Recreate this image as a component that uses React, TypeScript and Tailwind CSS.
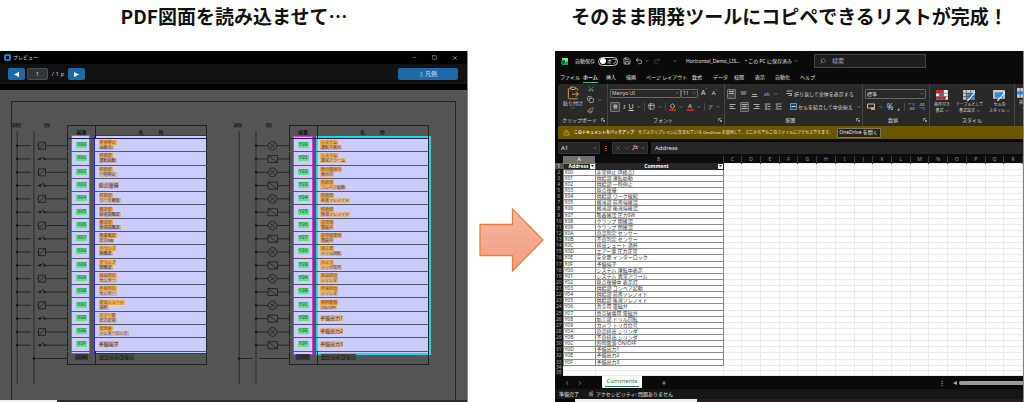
import React from 'react';
import { AlertTriangle, Bold, ChevronDown, ChevronLeft, ChevronRight, ClipboardPaste, Copy, Minus, Plus, Save, Search, Scissors, Square, Undo2, Redo2, X, Check, Table2, Paintbrush, Accessibility, Lightbulb } from 'lucide-react';

type Signal = [string, string, string?];

const inputs: Signal[] = [
  ['X00', '非常停止', '(B接点)'],
  ['X01', '供給部', '運転始動'],
  ['X02', '供給部', '一時停止'],
  ['X03', '原点復帰'],
  ['X04', '供給部', 'ワーク検知'],
  ['X05', '搬送部', '前進端確認'],
  ['X06', '搬送部', '後退端確認'],
  ['X07', '吸着確認', '圧力SW'],
  ['X08', 'クランプ', '開確認'],
  ['X09', 'クランプ', '閉確認'],
  ['X0A', '良品判定', 'センサー'],
  ['X0B', '不良判定', 'センサー'],
  ['X0C', '排出シュート', '満杯'],
  ['X0D', 'エアー源', '圧力正常'],
  ['X0E', '安全扉', 'インターロック'],
  ['X0F', '予備端子'],
];

const outputs: Signal[] = [
  ['Y00', 'システム', '運転中表示'],
  ['Y01', 'システム', '異常アラーム'],
  ['Y02', '原点復帰中', '表示灯'],
  ['Y03', '供給部', 'コンベア起動'],
  ['Y04', '供給部', '前進ソレノイド'],
  ['Y05', '供給部', '後退ソレノイド'],
  ['Y06', '真空用', '電磁弁'],
  ['Y07', '真空破壊用', '電磁弁'],
  ['Y08', '加工部', 'ドリル回転'],
  ['Y09', 'カメラ', 'トリガ信号'],
  ['Y0A', '良品排出', 'シリンダ'],
  ['Y0B', '不良排出', 'シリンダ'],
  ['Y0C', '照明電源', 'ON/OFF'],
  ['Y0D', '予備出力1'],
  ['Y0E', '予備出力2'],
  ['Y0F', '予備出力3'],
];

const PITCH = 13.3;
const FIRST = 17.7;

function Wiring({ output }: { output: boolean }) {
  const bus = output ? 22 : 5;
  const comY = FIRST + PITCH * 16;
  return (
    <svg width="55" height="264" viewBox="0 0 55 264" fill="none" stroke="#1c1c1c" strokeWidth="0.8" aria-hidden="true">
      <path d="M5.2 3V256M22 3V256" stroke="#333" strokeWidth="1.2" />
      {inputs.map((_, i) => {
        const y = FIRST + PITCH * i;
        return (
          <g key={i}>
            <circle cx={bus} cy={y} r="1" fill="#111" />
            {output ? (
              <>
                <path d={`M22 ${y}H34M43 ${y}H55`} />
                {i % 2 === 0 ? (
                  <>
                    <circle cx="38.5" cy={y} r="4.4" />
                    <path d={`M35.5 ${y - 3}l6 6m0 -6l-6 6`} />
                  </>
                ) : (
                  <path d={`M34 ${y - 3.5}h9.5v7h-9.5zM34 ${y - 3.5}l9.5 7`} />
                )}
              </>
            ) : (
              <>
                <path d={`M5 ${y}H19`} />
                {i % 2 === 0 ? (
                  <path d={`M26.5 ${y - 3.5}h7v7h-7zM26.5 ${y + 3.5}l7 -7M25 ${y}h2M33.5 ${y}H55`} />
                ) : (
                  <>
                    <path d={`M25 ${y}h2.5M28 ${y}l4 -2.5M33 ${y}H55`} />
                    <circle cx="28" cy={y} r="0.9" fill="#111" />
                    <circle cx="32.6" cy={y} r="0.9" fill="#111" />
                  </>
                )}
              </>
            )}
          </g>
        );
      })}
      <circle cx={output ? 5 : 22} cy={comY} r="1" fill="#111" />
      <path d={output ? `M5 ${comY}H19M25 ${comY}H55` : `M22 ${comY}H55`} />
    </svg>
  );
}

function TerminalTable({ rows, output }: { rows: Signal[]; output: boolean }) {
  return (
    <div className="relative w-[140px]">
      <div className={output ? 'absolute left-[4px] top-[11px] h-[219px] w-[20px] border border-fuchsia-500 bg-[#ccccff]' : 'absolute left-[4px] top-[10px] h-[219px] w-[19px] border border-[#e04858] bg-[#ccccff]'} />
      <div className={output ? 'absolute left-[27px] top-[11px] h-[219px] w-[115px] border-2 border-[#20d8e4] bg-[#ccccff]' : 'absolute left-[27px] top-[10px] h-[219px] w-[113px] border border-[#2828d0] bg-[#ccccff]'} />
      <table className="relative h-[240px] w-full table-fixed border-collapse border border-[#242424] text-[5px] leading-none">
        <colgroup>
          <col className="w-[28px]" />
          <col />
        </colgroup>
        <thead>
          <tr className="h-[13px] border-b border-[#242448] text-[#161616]">
            <th className="border-r border-[#242424] p-0 font-bold">端番</th>
            <th className="p-0 font-bold">名　　　称</th>
          </tr>
        </thead>
        <tbody>
          {rows.map(([address, first, second]) => (
            <tr key={address} className="h-[13px] border-b border-[#55556e]">
              <td className="p-0 text-center align-middle font-mono leading-[6px]">
                <span className="bg-[#63dc8c] px-px text-[#12602f]">{address}</span>
              </td>
              <td className="p-0 pl-[3px] align-middle leading-[6px]">
                {second ? (
                  <div className="flex flex-col items-start text-[4px] leading-[5px]">
                    <span className="bg-[#eaaa52] px-px text-[#70400c]">{first}</span>
                    <span className={output ? 'bg-[#dfb591] px-px text-[#4c3020]' : 'bg-[#c9b2b2] px-px text-[#3c2c2c]'}>{second}</span>
                  </div>
                ) : (
                  <div className="flex">
                    <span className={output ? 'bg-[#dfb591] text-[#4c3020]' : 'bg-[#c9b2b2] text-[#3c2c2c]'}>{first}</span>
                  </div>
                )}
              </td>
            </tr>
          ))}
          <tr className="h-[13px] text-[#121212]">
            <td className="border-r border-[#242424] p-0 text-center"><span className="bg-[#3c3c3c] px-px">COM</span></td>
            <td className="p-0 pl-[3px]"><span className="bg-[#444]">ユニットコモン</span></td>
          </tr>
        </tbody>
      </table>
    </div>
  );
}

function Circuit({ rows, output = false }: { rows: Signal[]; output?: boolean }) {
  return (
    <div className="flex w-[222px] items-start">
      <div className="w-[55px]">
        <div className="flex justify-between pr-[17px] text-[5px] leading-none text-[#161616]">
          <span className="bg-[#444]">24V</span>
          <span className="bg-[#444]">0V</span>
        </div>
        <Wiring output={output} />
      </div>
      <div className="pt-[2px]">
        <TerminalTable rows={rows} output={output} />
      </div>
    </div>
  );
}

function PreviewWindow() {
  return (
    <section className="flex flex-col overflow-hidden border-r border-[#888] bg-[#555]" aria-label="プレビュー">
      <header className="flex h-[13px] items-center gap-[2px] bg-black pl-1 pr-[9px] text-[5px] leading-none text-[#d4d4d4]">
        <svg width="7" height="7" viewBox="0 0 7 7"><rect x="1" y="1" width="5" height="5" rx="0.8" fill="#02162a" stroke="#18a0f0" strokeWidth="1.6" /></svg>
        <span className="flex-1">プレビュー</span>
        <div className="flex gap-[15px]">
          <button aria-label="最小化"><Minus size={5} /></button>
          <button aria-label="最大化"><Square size={5} /></button>
          <button aria-label="閉じる"><X size={6} /></button>
        </div>
      </header>
      <div className="flex h-[20px] items-center bg-[#121212] pl-2 pr-[9px] text-[6px] leading-none text-[#ccc]">
        <button aria-label="前のページ" className="flex h-[12px] w-[17px] items-center justify-center rounded-[2px] bg-[#1e6aa8]">
          <svg width="5" height="5" viewBox="0 0 5 5" fill="#fff"><path d="M5 0v5L0 2.5z" /></svg>
        </button>
        <input aria-label="ページ" defaultValue="1" className="ml-[2px] h-[12px] w-[21px] rounded-[2px] border border-[#4c4f52] bg-[#333638] text-center" />
        <span className="w-[20px] text-center">/ 1 p</span>
        <button aria-label="次のページ" className="flex h-[12px] w-[17px] items-center justify-center rounded-[2px] bg-[#1e6aa8]">
          <svg width="5" height="5" viewBox="0 0 5 5" fill="#fff"><path d="M0 0v5l5-2.5z" /></svg>
        </button>
        <button className="ml-auto flex h-[12px] w-[60px] items-center justify-center gap-px rounded-[2px] bg-[#1e6aa8] text-[#d8e6f0]">
          <Lightbulb size={5} className="rotate-180" />凡例
        </button>
      </div>
      <div className="h-[6px] bg-black" />
      <div className="flex flex-1 flex-col pl-[11px] pr-[11px] pt-[11px]">
        <div className="flex-1 border border-b-0 border-[#262626] pt-[21px]">
          <div className="flex">
            <Circuit rows={inputs} />
            <Circuit rows={outputs} output />
          </div>
        </div>
      </div>
      <div className="flex h-[2px] bg-[#2a2a2a]"><span className="w-[57px] bg-[#eee]" /></div>
    </section>
  );
}

const tabs = ['ファイル', 'ホーム', '挿入', '描画', 'ページ レイアウト', '数式', 'データ', '校閲', '表示', '自動化', 'ヘルプ'];

function Caret() {
  return <ChevronDown size={4} strokeWidth={3} className="shrink-0 text-[#bbb]" />;
}

function Lines({ d }: { d: string }) {
  return <svg width="7" height="7" viewBox="0 0 7 7" stroke="#bbb" strokeWidth="0.9" fill="none"><path d={d} /></svg>;
}

function Group({ label, className, children }: { label: string; className: string; children: React.ReactNode }) {
  return (
    <div className={`flex h-full flex-col border-r border-[#454545] ${className}`}>
      <div className="flex h-[32px] min-w-0 flex-col justify-center">{children}</div>
      <div className="flex h-[8px] items-center pr-[2px]">
        <span className="flex-1 text-center">{label}</span>
        <svg width="4" height="4" viewBox="0 0 4 4" fill="none" stroke="#bbb" strokeWidth="0.7"><path d="M.5 3V.5H3M1.5 1.5L3.5 3.5M3.5 2v1.5H2" /></svg>
      </div>
    </div>
  );
}

function StyleButton({ first, second, children }: { first: string; second: string; children: React.ReactNode }) {
  return (
    <button className="flex flex-col items-center text-[4px] leading-[6px] whitespace-nowrap">
      <svg width="14" height="13" viewBox="0 0 13 12">{children}</svg>
      <span>{first}</span>
      <span className="flex items-center gap-px">{second}<Caret /></span>
    </button>
  );
}

function Ribbon() {
  return (
    <div className="ml-[3px] flex h-[42px] overflow-hidden rounded-l-[2px] bg-[#292929] text-[5px] leading-[6px] text-[#d6d6d6]">
      <Group label="クリップボード" className="w-[50px] shrink-0">
        <div className="flex gap-[4px] pl-[5px]">
          <button className="flex w-[20px] flex-col items-center whitespace-nowrap">
            <ClipboardPaste size={14} strokeWidth={1.7} className="text-[#d8a04c]" />
            <span>貼り付け</span>
            <Caret />
          </button>
          <div className="flex flex-col items-center gap-[4px]">
            <button aria-label="切り取り"><Scissors size={6} className="-rotate-90 text-[#6aa8dc]" /></button>
            <button aria-label="コピー"><Copy size={7} /></button>
            <button aria-label="書式のコピー"><Paintbrush size={7} className="text-[#e0b060]" /></button>
          </div>
          <span className="self-center"><Caret /></span>
        </div>
      </Group>
      <Group label="フォント" className="w-[117px] shrink-0">
        <div className="flex items-center pl-[2px]">
          <button className="flex h-[9px] w-[71px] items-center justify-between rounded-[1px] border border-[#666] px-px">Meiryo UI<Caret /></button>
          <button className="flex h-[9px] w-[17px] items-center justify-between rounded-[1px] border border-[#666] px-px">11<Caret /></button>
          <button className="ml-[3px] text-[7px]">A<sup className="text-[#58a8e8]">ˆ</sup></button>
          <button className="ml-[4px] text-[6px]">A<sup className="text-[#58a8e8]">ˇ</sup></button>
        </div>
        <div className="mt-[4px] flex items-center justify-between pl-[2px] pr-[4px] text-[7px]">
          <button aria-label="太字" className="flex size-[10px] items-center justify-center rounded-[1px] border border-[#777] bg-[#444]"><Bold size={5} strokeWidth={4} /></button>
          <button className="font-serif italic">I</button>
          <button className="underline">U</button><Caret />
          <span className="h-2 w-px bg-[#4a4a4a]" />
          <button aria-label="罫線"><Table2 size={7} /></button><Caret />
          <span className="h-2 w-px bg-[#4a4a4a]" />
          <button aria-label="塗りつぶしの色">
            <svg width="7" height="8" viewBox="0 0 7 8"><path d="M3.5 .8L6 3.200L3.500 5.400L1 3.200z" fill="none" stroke="#ccc" strokeWidth=".8" /><path d="M0 6h7v2H0z" fill="#e01818" /></svg>
          </button><Caret />
          <button className="h-[8px] w-[7px] border-b-2 border-[#e01818] text-[6px] leading-[6px]">A</button><Caret />
          <span className="h-2 w-px bg-[#4a4a4a]" />
          <button className="text-[5px]">ア</button><Caret />
        </div>
      </Group>
      <Group label="配置" className="w-[138px] shrink-0">
        <div className="flex items-center gap-[4px] pl-[2px]">
          <button aria-label="上揃え" className="flex size-[10px] items-center justify-center rounded-[1px] border border-[#777] bg-[#444]"><Lines d="M1 1.5h5M1 3.5h5" /></button>
          <button aria-label="上下中央揃え"><Lines d="M.5 2h6M1 4h5" /></button>
          <button aria-label="下揃え"><Lines d="M1 4.5h5M.5 6.5h6" /></button>
          <button className="ml-[2px] text-[#6ab0e8]">ab</button><Caret />
          <span className="flex-1" />
          <button className="flex items-center gap-px pr-[10px] whitespace-nowrap"><Lines d="M.5 1h6M.5 3.5h5v2h-3" />折り返して全体を表示する</button>
        </div>
        <div className="mt-[3px] flex items-center gap-[4px] pl-[4px]">
          <button aria-label="左揃え"><Lines d="M.5 1.5h6M.5 3.5h4M.5 5.5h6" /></button>
          <button aria-label="中央揃え" className="flex size-[10px] items-center justify-center rounded-[1px] border border-[#777] bg-[#444]"><Lines d="M.5 1.5h6M1.5 3.5h4M.5 5.5h6" /></button>
          <button aria-label="右揃え"><Lines d="M.5 1.5h6M2.5 3.5h4M.5 5.5h6" /></button>
          <button aria-label="インデントを減らす"><Lines d="M.5 1h6M3.5 3.5h3M.5 6h6M3 2L1 3.5L3 5" /></button>
          <button aria-label="インデントを増やす"><Lines d="M.5 1h6M3.5 3.5h3M.5 6h6M1 2L3 3.5L1 5" /></button>
          <span className="flex-1" />
          <button className="flex items-center gap-px whitespace-nowrap">
            <svg width="7" height="7" viewBox="0 0 7 7"><path d="M.5.5h6v6h-6z" fill="#164b78" stroke="#79b8e8" strokeWidth=".7" /><path d="M1.5 3.5h4" stroke="#fff" strokeWidth=".8" /></svg>
            セルを結合して中央揃え
          </button>
          <span className="pr-[4px]"><Caret /></span>
        </div>
      </Group>
      <Group label="数値" className="w-[67px] shrink-0">
        <button className="ml-[2px] flex h-[10px] w-[61px] items-center justify-between rounded-[1px] border border-[#666] px-px">標準<Caret /></button>
        <div className="mt-[3px] flex items-center justify-between px-[4px] text-[8px] leading-[9px]">
          <button aria-label="通貨"><svg width="8" height="7" viewBox="0 0 8 7"><path d="M.5 1h7v4h-7z" fill="none" stroke="#bbb" /><path d="M4 4h4v3H4z" fill="#d8a04c" /></svg></button><Caret />
          <button>%</button>
          <button className="font-bold">,</button>
          <span className="h-2 w-px bg-[#4a4a4a]" />
          <button className="text-[4px] leading-[4px]"><span className="block text-[#58a8e8]">←0</span>.00</button>
          <button className="text-[4px] leading-[4px]">.00<span className="block text-[#58a8e8]">→0</span></button>
        </div>
      </Group>
      <div className="flex w-[85px] shrink-0 flex-col border-r border-[#454545]">
        <div className="flex h-[32px] items-center justify-between px-[4px] pt-[2px]">
          <StyleButton first="条件付き" second="書式"><path d="M1 1h11v9H1z" fill="#eee" /><path d="M1 1h7v3H1zM1 7h9v3H1z" fill="#d82020" /><path d="M4 4h4v3H4z" fill="#2472b8" /><path d="M1 4h11M1 7h11M4 1v9M8 1v9" stroke="#555" strokeWidth=".5" /></StyleButton>
          <StyleButton first="テーブルとして" second="書式設定"><path d="M1 1h11v9H1z" fill="#ccc" /><path d="M4 4h8v6H4z" fill="#2e8cd8" /><path d="M1 4h11M1 7h11M4 1v9M8 1v9" stroke="#444" strokeWidth=".6" /><path d="M12 3L7 9l-2 2" stroke="#fff" fill="none" /></StyleButton>
          <StyleButton first="セルの" second="スタイル"><path d="M1 1h11v8H1z" fill="#ccc" /><path d="M2.500 3h8v5h-8z" fill="#2e8cd8" /><path d="M12 3L7 9l-2 2" stroke="#fff" fill="none" /></StyleButton>
        </div>
        <span className="h-[8px] text-center leading-[8px]">スタイル</span>
      </div>
      <div className="min-w-0 flex-1 overflow-hidden pl-px pt-[3px]">
        <StyleButton first="挿入" second=""><path d="M1 1h11v9H1z" fill="#ccc" /><path d="M1 4h9v3H1z" fill="#2e8cd8" /><path d="M4 1v9M8 1v9" stroke="#444" strokeWidth=".6" /></StyleButton>
      </div>
    </div>
  );
}

const columns = 'ABCDEFGHIJKLMNOPQR'.split('');
const listRows = [...inputs, ...outputs].map(([address, first, second]) => [address, second ? `${first} ${second}` : first]);

function Filter() {
  return <button aria-label="フィルター" className="flex size-[5px] items-center justify-center bg-[#eee]"><svg width="3" height="2" viewBox="0 0 3 2"><path d="M0 0h3L1.500 2z" fill="#333" /></svg></button>;
}

function Sheet() {
  return (
    <table className="h-[220px] w-full table-fixed border-collapse bg-white text-[5px] leading-[5px] text-[#333]">
      <colgroup>
        <col className="w-[8px]" />
        <col className="w-[32px]" />
        <col className="w-[128px]" />
        {columns.slice(2).map((c) => <col key={c} />)}
      </colgroup>
      <thead>
        <tr className="h-[7px] bg-[#0c0c0c] text-[#999]">
          <th className="p-0" />
          {columns.map((c) => (
            <th key={c} className={c === 'A' ? 'border-b border-[#4a9a70] bg-[#707070] p-0 font-normal text-white' : 'border-r border-[#3a3a3a] p-0 font-normal'}>{c}</th>
          ))}
        </tr>
      </thead>
      <tbody>
        <tr>
          <th className="bg-[#555] p-0 font-normal text-white">1</th>
          <th className="border border-[#217346] bg-[#262626] p-0 text-white">
            <div className="flex items-center justify-end gap-px"><span>Address</span><Filter /></div>
          </th>
          <th className="border border-[#262626] bg-[#262626] p-0 text-white">
            <div className="flex items-center"><span className="flex-1">Comment</span><Filter /></div>
          </th>
          {columns.slice(2).map((c) => <td key={c} className="border border-[#ebebeb] p-0" />)}
        </tr>
        {listRows.map(([address, comment], i) => (
          <tr key={address}>
            <th className="bg-[#141414] p-0 font-normal text-[#aaa]">{i + 2}</th>
            <td className="border border-[#888] p-0 pl-px">{address}</td>
            <td className="border border-[#888] p-0 pl-px whitespace-nowrap">{comment}</td>
            {columns.slice(2).map((c) => <td key={c} className="border border-[#ebebeb] p-0" />)}
          </tr>
        ))}
        {[34, 35].map((n) => (
          <tr key={n}>
            <th className="bg-[#141414] p-0 font-normal text-[#aaa]">{n}</th>
            {columns.map((c) => <td key={c} className="border border-[#ebebeb] p-0" />)}
          </tr>
        ))}
      </tbody>
    </table>
  );
}

function SpreadsheetWindow() {
  return (
    <section className="flex min-w-0 flex-col overflow-hidden border-r border-[#888] bg-[#0a0a0a] text-[#e0e0e0]" aria-label="Excel">
      <header className="flex h-[20px] items-center pl-[6px] text-[5px] leading-none whitespace-nowrap">
        <svg width="7" height="7" viewBox="0 0 7 7"><path d="M1 0h6v7H1z" fill="#8fe060" /><path d="M1 3.500h6V7H1z" fill="#1f9a50" /><path d="M0 2h4v4H0z" fill="#107040" /></svg>
        <label htmlFor="autosave" className="ml-[7px] w-[23px]">自動保存</label>
        <button id="autosave" role="switch" aria-checked="false" className="flex h-[9px] w-[20px] items-center gap-px rounded-full border border-[#ccc] px-px"><span className="size-[6px] shrink-0 rounded-full bg-white" />オフ</button>
        <button aria-label="保存" className="ml-[5px]"><Save size={8} /></button>
        <button aria-label="元に戻す" className="ml-[4px]"><Undo2 size={8} /></button>
        <span className="ml-[2px]"><Caret /></span>
        <button aria-label="やり直し" className="ml-[4px] text-[#555]"><Redo2 size={8} /></button>
        <span className="ml-[12px]"><Caret /></span>
        <span className="ml-[9px]">Horizontal_Demo_LIS…</span>
        <span className="ml-[5px] flex items-center gap-[2px]">• この PC に保存済み<Caret /></span>
        <label className="ml-auto mr-[97px] flex h-[14px] w-[112px] items-center gap-[6px] border border-[#444] bg-[#1e1e1e] pl-[5px] text-[#aaa]">
          <Search size={6} className="shrink-0 -scale-x-100" />
          <input aria-label="検索" placeholder="検索" className="w-full min-w-0 bg-transparent text-[6px] placeholder:text-[#aaa]" />
        </label>
      </header>
      <nav className="grid h-[13px] grid-cols-[23px_23px_20px_20px_46px_21px_21px_21px_20px_25px_20px] items-center pl-[5px] text-[5px] leading-[10px] whitespace-nowrap">
        {tabs.map((tab) => (
          <a key={tab} href="#" className={tab === 'ホーム' ? 'justify-self-start border-b border-[#50b080] font-bold' : 'justify-self-start border-b border-transparent'}>{tab}</a>
        ))}
      </nav>
      <Ribbon />
      <div className="ml-[3px] flex h-[13px] items-center gap-[4px] bg-[#6c5600] pl-[5px] text-[4px] leading-none whitespace-nowrap text-[#f0ecd8]">
        <AlertTriangle size={7} className="shrink-0 text-[#ffb040]" />
        <strong>このドキュメントをバックアップ</strong>
        <span>サブスクリプションに含まれている OneDrive を使用して、どこからでもこのファイルにアクセスできます。</span>
        <button className="h-[10px] w-[44px] shrink-0 rounded-[1px] border border-[#777] bg-[#262626] text-[5px]">OneDrive を開く</button>
      </div>
      <div className="flex h-[17px] items-center gap-[3px] pl-[3px] text-[6px] leading-none">
        <button className="flex h-[12px] w-[42px] items-center justify-between rounded-[1px] border border-[#333] bg-[#262626] px-[2px]">A1<Caret /></button>
        <span>⋮</span>
        <div className="flex h-[12px] w-[36px] items-center justify-around border border-[#333] bg-[#262626] text-[#777]">
          <X size={6} /><Check size={6} /><i className="font-serif text-[7px] text-[#ddd]">fx</i><Caret />
        </div>
        <input aria-label="数式バー" defaultValue="Address" className="h-[12px] min-w-0 flex-1 bg-[#262626] pl-[4px]" />
      </div>
      <Sheet />
      <div className="flex h-[13px] items-center">
        <button aria-label="前のシート" className="ml-[9px]"><ChevronLeft size={6} /></button>
        <button aria-label="次のシート" className="ml-[7px]"><ChevronRight size={6} /></button>
        <button className="ml-[19px] h-[12px] w-[40px] self-start rounded-b-[1px] bg-white px-[3px] text-[6px] leading-[9px] text-[#26704c]"><span className="block border-b border-[#218050]">Comments</span></button>
        <button aria-label="シートの追加" className="ml-[19px]"><Plus size={6} /></button>
        <span className="ml-auto text-[6px] leading-none">⋮</span>
        <svg className="ml-[8px]" width="4" height="4" viewBox="0 0 4 4"><path d="M4 0v4L0 2z" fill="#aaa" /></svg>
        <span className="ml-[2px] h-[4px] w-[64px] rounded-l-full bg-[#999]" />
      </div>
      <div className="flex h-[10px] items-center bg-[#161616] pl-[4px] text-[5px] leading-none">
        <span className="w-[29px]">準備完了</span>
        <Accessibility size={6} />
        <span className="ml-[2px]">アクセシビリティ: 問題ありません</span>
      </div>
      <div className="flex h-[3px] bg-[#241c1e]"><span className="w-[20px] bg-black" /><span className="w-[122px] bg-[#f0f0f0]" /></div>
    </section>
  );
}

export default function App() {
  return (
    <main className="grid min-h-screen grid-cols-[468fr_87fr_469fr] grid-rows-[51px_1fr] overflow-hidden bg-white font-['Noto_Sans','Noto_Sans_CJK_JP',sans-serif]">
      <h1 className="self-start pt-[4px] text-center font-['Noto_Sans_CJK_JP',sans-serif] text-[19px] leading-[24px] font-bold text-[#111]">PDF図面を読み込ませて…</h1>
      <span />
      <h2 className="self-start pt-[4px] text-center font-['Noto_Sans_CJK_JP',sans-serif] text-[19px] leading-[24px] font-bold whitespace-nowrap text-[#111]">そのまま開発ツールにコピペできるリストが完成！</h2>
      <PreviewWindow />
      <div className="flex items-start justify-center pt-[156px]">
        <svg width="67" height="66" viewBox="0 0 67 66" aria-hidden="true">
          <defs>
            <linearGradient id="arrow" x1="0" y1="0" x2="0" y2="1">
              <stop offset="0" stopColor="#f6b8a2" />
              <stop offset="1" stopColor="#f29c80" />
            </linearGradient>
          </defs>
          <path d="M2 17.500H34.500V2L65 33L34.500 64V48.500H2z" fill="url(#arrow)" stroke="#ed7d3a" strokeWidth="1.300" />
        </svg>
      </div>
      <SpreadsheetWindow />
    </main>
  );
}
